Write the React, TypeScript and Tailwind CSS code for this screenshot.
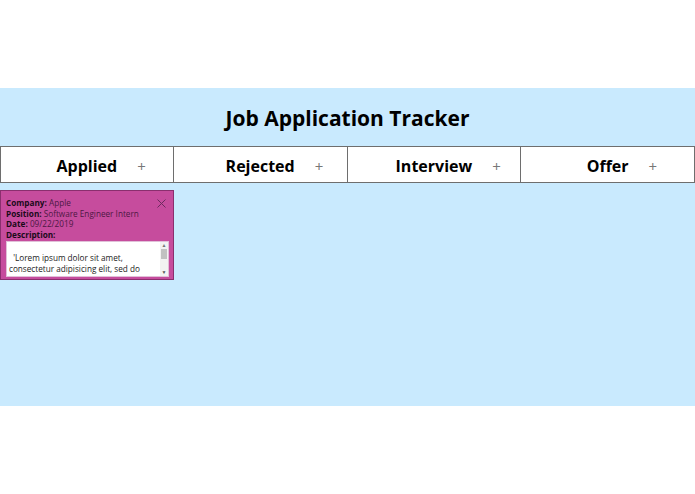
import React from "react";

const columns = ["Applied", "Rejected", "Interview", "Offer"];

function JobCard() {
  return (
    <div className="relative w-[174px] h-[90px] bg-[#c64c9d] border border-[#8a2f6e] px-[5px] pt-[7px] text-[8.2px] leading-[10.5px] text-[#1a0a18]">
      <button className="absolute right-[7px] top-[8px] text-[#6b2a5e]">
        <svg width="9" height="9" viewBox="0 0 9 9" fill="none" stroke="currentColor" strokeWidth="1">
          <path d="M0.5 0.5 L8.5 8.5 M8.5 0.5 L0.5 8.5" />
        </svg>
      </button>
      <div>
        <span className="font-bold">Company:</span>{" "}
        <span className="text-[#4d1844]">Apple</span>
      </div>
      <div>
        <span className="font-bold">Position:</span>{" "}
        <span className="text-[#4d1844]">Software Engineer Intern</span>
      </div>
      <div>
        <span className="font-bold">Date:</span>{" "}
        <span className="text-[#4d1844]">09/22/2019</span>
      </div>
      <div className="font-bold">Description:</div>
      <div className="relative mt-[1px] w-[163px] h-[36px] bg-white border border-[#e0c0d8] overflow-hidden">
        <div className="pl-[2px] pr-[10px] pt-[10px] leading-[11px] text-[#222]">
          &nbsp;&nbsp;'Lorem ipsum dolor sit amet, consectetur adipisicing elit, sed do
        </div>
        <div className="absolute right-0 top-0 bottom-0 w-[8px] bg-[#f2f2f2] flex flex-col items-center">
          <span className="text-[5px] leading-[7px] text-[#777]">▲</span>
          <div className="w-[6px] h-[10px] bg-[#c1c1c1]" />
          <div className="flex-1" />
          <span className="text-[5px] leading-[7px] text-[#555]">▼</span>
        </div>
      </div>
    </div>
  );
}

export default function App() {
  return (
    <div className="w-[695px] h-[494px] bg-white font-['Open_Sans','Noto_Sans',sans-serif]">
      <div className="h-[88px]" />
      <div className="h-[318px] bg-[#c9eafe]">
        <h1 className="h-[58px] pt-[3px] flex items-center justify-center text-[21px] font-bold text-black">
          Job Application Tracker
        </h1>
        <div className="grid grid-cols-4 bg-white border-y border-[#6e6e6e]">
          {columns.map((col, i) => (
            <div
              key={col}
              className={
                "h-[35px] pt-[2px] flex items-center justify-center border-[#6e6e6e] " +
                (i === 0 ? "border-x" : "border-r")
              }
            >
              <span className="relative text-[16px] font-bold text-black">
                {col}
                <span className="absolute left-full top-[1px] ml-[20px] text-[15px] font-normal text-[#777]">+</span>
              </span>
            </div>
          ))}
        </div>
        <div className="grid grid-cols-4 pt-[7px]">
          <div>
            <JobCard />
          </div>
        </div>
      </div>
    </div>
  );
}
